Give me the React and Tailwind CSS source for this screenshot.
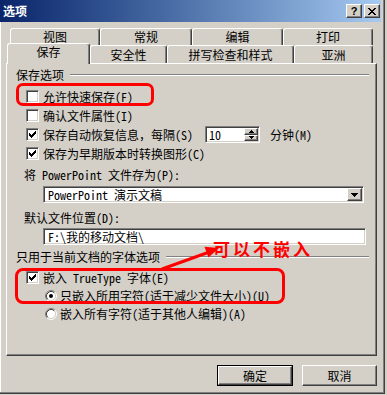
import React from "react";

const CJK = "font-['Noto_Sans_Mono_CJK_SC','Noto_Sans_CJK_SC',sans-serif]";

function Check({ checked }) {
  return (
    <span className="w-[13px] h-[13px] shrink-0 bg-white border border-t-[#808080] border-l-[#808080] border-r-white border-b-white shadow-[inset_1px_1px_#404040,inset_-1px_-1px_#d4d0c8] flex items-center justify-center">
      {checked && (
        <svg width="7" height="7" viewBox="0 0 7 7" shapeRendering="crispEdges">
          <path
            fill="#000"
            d="M6 0h1v1h-1z M5 1h2v1h-2z M0 2h1v1h-1z M4 2h3v1h-3z M0 3h2v1h-2z M3 3h3v1h-3z M0 4h5v1h-5z M1 5h3v1h-3z M2 6h1v1h-1z"
          />
        </svg>
      )}
    </span>
  );
}

function Radio({ checked }) {
  return (
    <svg width="12" height="12" viewBox="0 0 12 12" className="shrink-0">
      <circle cx="6" cy="6" r="4.5" fill="#fff" />
      <path d="M2.11 9.89 A5.5 5.5 0 0 1 9.89 2.11" fill="none" stroke="#808080" strokeWidth="1" />
      <path d="M9.89 2.11 A5.5 5.5 0 0 1 2.11 9.89" fill="none" stroke="#ffffff" strokeWidth="1" />
      <path d="M2.82 9.18 A4.5 4.5 0 0 1 9.18 2.82" fill="none" stroke="#404040" strokeWidth="1" />
      <path d="M9.18 2.82 A4.5 4.5 0 0 1 2.82 9.18" fill="none" stroke="#d4d0c8" strokeWidth="1" />
      {checked && <circle cx="6" cy="6" r="2" fill="#000" />}
    </svg>
  );
}

function CheckRow({ checked, children, h = "h-[19px]", className = "" }) {
  return (
    <div className={`flex items-center ml-[19px] gap-[4px] ${h} ${className}`}>
      <Check checked={checked} />
      <span className="whitespace-nowrap">{children}</span>
    </div>
  );
}

function GroupLabel({ children, className = "" }) {
  return (
    <div className={`flex items-center h-[16px] pl-[9px] pr-[7px] ${className}`}>
      <span className="whitespace-nowrap">{children}</span>
      <span className="flex-1 ml-[6px] h-[2px] border-t border-t-[#808080] border-b border-b-white" />
    </div>
  );
}

function Raised({ className = "", children }) {
  return (
    <div
      className={`bg-[#d4d0c8] border border-t-white border-l-white border-r-[#404040] border-b-[#404040] shadow-[inset_-1px_-1px_#808080] flex items-center justify-center ${className}`}
    >
      {children}
    </div>
  );
}

function Tab({ w, children, row1, selected }) {
  if (selected) {
    return (
      <div
        className={`${w} h-[21px] -mb-[1px] relative z-10 bg-[#d4d0c8] border-t border-l border-white border-r border-r-[#404040] shadow-[inset_-1px_0_#808080] rounded-t-[3px] flex items-center justify-center pb-[5px]`}
      >
        <span className="leading-[12px]">{children}</span>
      </div>
    );
  }
  return (
    <div
      className={`${w} ${row1 ? "h-[17px]" : "h-[18px]"} bg-[#d4d0c8] border-t border-l border-white border-r border-r-[#404040] shadow-[inset_-1px_0_#808080] rounded-t-[3px] flex items-center justify-center`}
    >
      <span className="leading-[12px]">{children}</span>
    </div>
  );
}

export default function App() {
  return (
    <div className={`w-[387px] h-[395px] bg-[#d4d0c8] relative overflow-hidden text-[12px] leading-[14px] text-black ${CJK}`}>
      <div className="w-[385px] h-[394px] flex flex-col border-r border-b border-r-[#404040] border-b-[#404040]">
        <div className="flex-1 flex flex-col border-r border-b border-r-[#808080] border-b-[#808080]">
          {/* Title bar */}
          <div className="h-[22px] mr-[2px] flex items-center bg-linear-to-r from-[#0a246a] to-[#a6caf0] pl-[3px] pr-[1px]">
            <span className="flex-1 text-white font-bold text-[12px] font-['Noto_Sans_CJK_SC',sans-serif] leading-[14px]">
              选项
            </span>
            <Raised className="w-[16px] h-[14px]">
              <span className="font-['Liberation_Sans',sans-serif] font-bold text-[11px] leading-[11px] mt-[1px]">?</span>
            </Raised>
            <Raised className="w-[16px] h-[14px] ml-[2px]">
              <svg width="8" height="7" viewBox="0 0 8 7" shapeRendering="crispEdges">
                <path
                  fill="#000"
                  d="M0 0h2v1h-2z M6 0h2v1h-2z M1 1h2v1h-2z M5 1h2v1h-2z M2 2h4v1h-4z M3 3h2v1h-2z M2 4h4v1h-4z M1 5h2v1h-2z M5 5h2v1h-2z M0 6h2v1h-2z M6 6h2v1h-2z"
                />
              </svg>
            </Raised>
          </div>

          {/* Body */}
          <div className="flex-1 flex flex-col border-l border-l-white">
            {/* Tabs row 1 */}
            <div className="flex h-[17px] mt-[6px] ml-[9px]">
              <Tab w="w-[90px]" row1>视图</Tab>
              <Tab w="w-[92px]" row1>常规</Tab>
              <Tab w="w-[91px]" row1>编辑</Tab>
              <Tab w="w-[90px]" row1>打印</Tab>
            </div>
            {/* Tabs row 2 */}
            <div className="flex items-end h-[18px] ml-[6px]">
              <Tab w="w-[83px]" selected>保存</Tab>
              <Tab w="w-[77px]">安全性</Tab>
              <Tab w="w-[127px]">拼写检查和样式</Tab>
              <Tab w="w-[79px]">亚洲</Tab>
            </div>

            {/* Panel */}
            <div className="ml-[5px] w-[371px] h-[293px] flex flex-col border-t border-l border-white border-r border-b border-r-[#404040] border-b-[#404040] shadow-[inset_-1px_-1px_#808080]">
              <GroupLabel className="mt-[3px]">保存选项</GroupLabel>
              <CheckRow className="mt-[4px]">允许快速保存(F)</CheckRow>
              <CheckRow>确认文件属性(I)</CheckRow>
              <div className="flex items-center ml-[19px] h-[19px]">
                <Check checked />
                <span className="ml-[4px] w-[162px] whitespace-nowrap">保存自动恢复信息，每隔(S)</span>
                <div className="w-[55px] h-[17px] flex bg-white border border-t-[#808080] border-l-[#808080] border-r-white border-b-white shadow-[inset_1px_1px_#404040,inset_-1px_-1px_#d4d0c8] p-[1px]">
                  <span className="flex-1 pl-[2px] flex items-center">10</span>
                  <div className="w-[14px] flex flex-col">
                    <Raised className="flex-1">
                      <svg width="5" height="3" viewBox="0 0 5 3" shapeRendering="crispEdges">
                        <path fill="#000" d="M2 0h1v1h-1z M1 1h3v1h-3z M0 2h5v1h-5z" />
                      </svg>
                    </Raised>
                    <Raised className="flex-1">
                      <svg width="5" height="3" viewBox="0 0 5 3" shapeRendering="crispEdges">
                        <path fill="#000" d="M0 0h5v1h-5z M1 1h3v1h-3z M2 2h1v1h-1z" />
                      </svg>
                    </Raised>
                  </div>
                </div>
                <span className="ml-[10px] whitespace-nowrap">分钟(M)</span>
              </div>
              <CheckRow checked>保存为早期版本时转换图形(C)</CheckRow>

              <div className="mt-[4px] h-[16px] ml-[17px] flex items-center whitespace-nowrap">将 PowerPoint 文件存为(P):</div>
              <div className="mt-[3px] ml-[36px] w-[321px] h-[17px] flex bg-white border border-t-[#808080] border-l-[#808080] border-r-white border-b-white shadow-[inset_1px_1px_#404040,inset_-1px_-1px_#d4d0c8] p-[1px]">
                <span className="flex-1 pl-[3px] flex items-center whitespace-nowrap">PowerPoint 演示文稿</span>
                <Raised className="w-[15px]">
                  <svg width="7" height="4" viewBox="0 0 7 4" shapeRendering="crispEdges">
                    <path fill="#000" d="M0 0h7v1h-7z M1 1h5v1h-5z M2 2h3v1h-3z M3 3h1v1h-1z" />
                  </svg>
                </Raised>
              </div>

              <div className="mt-[7px] h-[16px] ml-[17px] flex items-center whitespace-nowrap">默认文件位置(D):</div>
              <div className="mt-[2px] ml-[36px] w-[323px] h-[17px] flex items-center bg-white border border-t-[#808080] border-l-[#808080] border-r-white border-b-white shadow-[inset_1px_1px_#404040,inset_-1px_-1px_#d4d0c8] pl-[4px]">
                {"F:\\我的移动文档\\"}
              </div>

              <GroupLabel className="mt-[4px]">只用于当前文档的字体选项</GroupLabel>
              <CheckRow checked className="mt-[3px]">嵌入 TrueType 字体(E)</CheckRow>
              <div className="flex items-center ml-[38px] h-[18px] gap-[3px]">
                <Radio checked />
                <span className="whitespace-nowrap">只嵌入所用字符(适于减少文件大小)(U)</span>
              </div>
              <div className="flex items-center ml-[38px] h-[17px] gap-[3px]">
                <Radio />
                <span className="whitespace-nowrap">嵌入所有字符(适于其他人编辑)(A)</span>
              </div>
            </div>

            {/* Buttons */}
            <div className="flex mt-[9px] ml-[216px] gap-[9px]">
              <div className="w-[76px] h-[21px] border border-black">
                <Raised className="w-full h-full">确定</Raised>
              </div>
              <Raised className="w-[75px] h-[21px]">取消</Raised>
            </div>
          </div>
        </div>
      </div>

      {/* Annotations overlay */}
      <div className="absolute left-[16px] top-[83px] w-[138px] h-[23px] border-[3px] border-[#ff0000] rounded-[7px] pointer-events-none" />
      <div className="absolute left-[15px] top-[268px] w-[270px] h-[36px] border-[3px] border-[#ff0000] rounded-[8px] pointer-events-none" />
      <svg className="absolute left-0 top-0 pointer-events-none" width="387" height="395" viewBox="0 0 387 395">
        <line x1="162" y1="269" x2="208" y2="252.5" stroke="#ff0000" strokeWidth="3" />
        <polygon points="219,248 208.4,257.5 204.5,246.8" fill="#ff0000" />
      </svg>
      <div className="absolute left-[213px] top-[240px] text-[17px] leading-[18px] font-bold tracking-[3px] text-[#ff0000] font-['Noto_Sans_CJK_SC',sans-serif] whitespace-nowrap">
        可以不嵌入
      </div>
    </div>
  );
}
